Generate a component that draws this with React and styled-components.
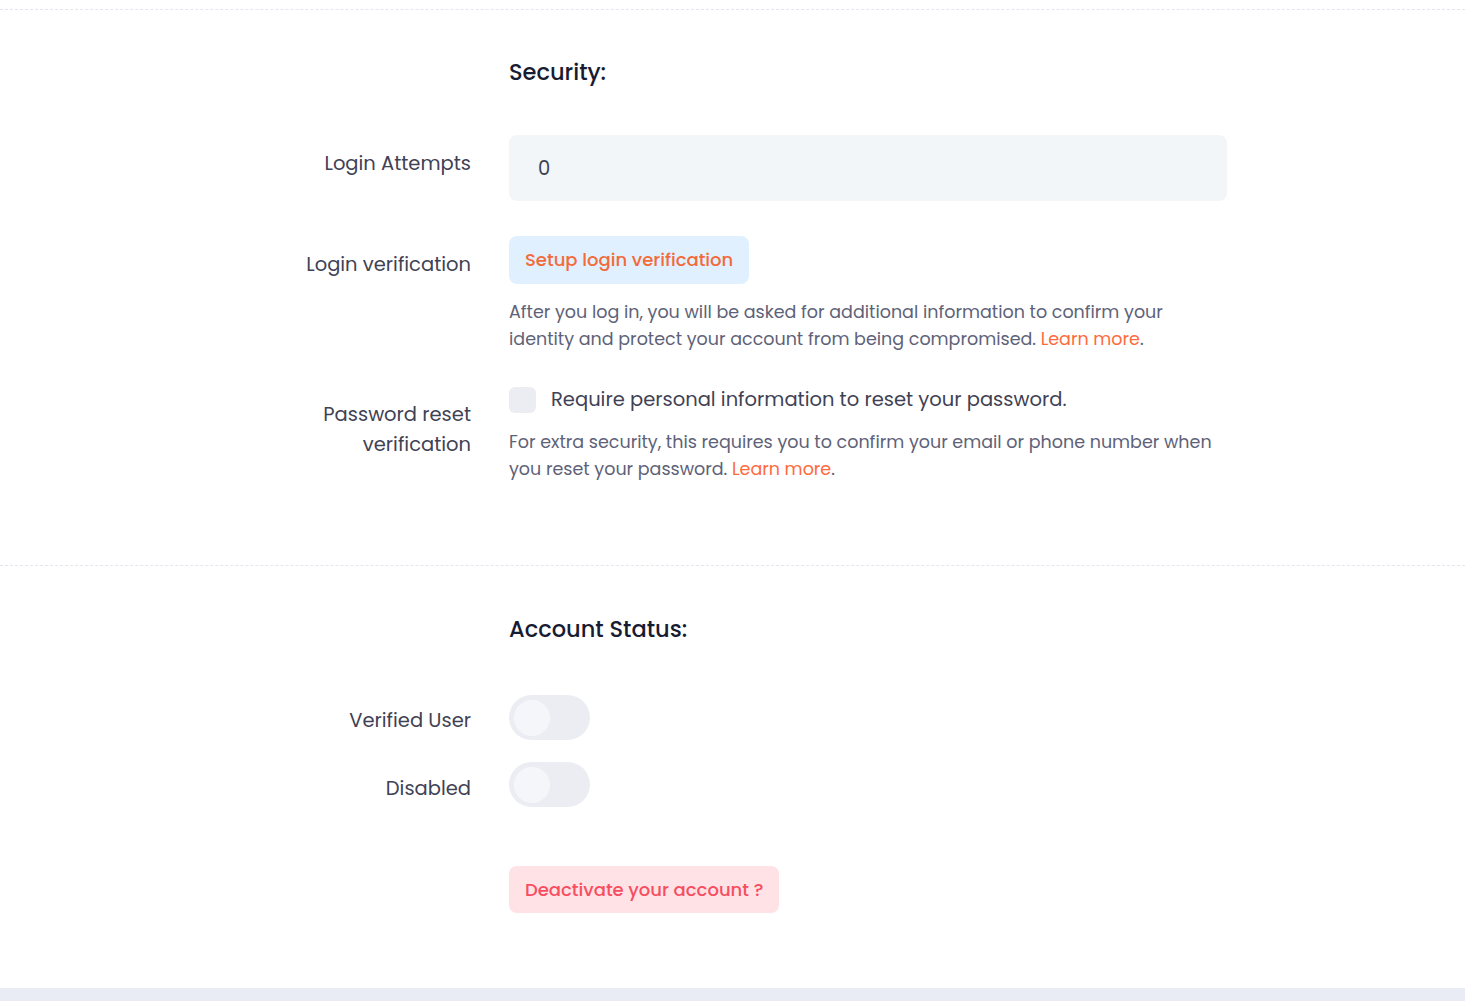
import React from "react"
import styled, { createGlobalStyle } from "styled-components"

const Global = createGlobalStyle`
  html, body { margin: 0; padding: 0; background: #eaecf5; }
  body { font-family: Poppins, "DejaVu Sans", sans-serif; }
`

const Card = styled.div`
  background: #ffffff;
  min-height: 988px;
  box-sizing: border-box;
`

const CardTop = styled.div`
  height: 9px;
  border-bottom: 1px dashed #e4e6ef;
`

const Section = styled.section`
  padding: ${p => p.$top || 47}px 0 ${p => p.$bottom || 82}px;
  border-bottom: ${p => (p.$divider ? "1px dashed #e4e6ef" : "none")};
`

const Row = styled.div`
  display: grid;
  grid-template-columns: 471px 718px;
  column-gap: 38px;
  margin-bottom: ${p => p.$gap ?? 35}px;
  &:last-child { margin-bottom: 0; }
`

const Heading = styled.h3`
  grid-column: 2;
  margin: 0 0 ${p => p.$gap || 48}px;
  font-size: 22.5px;
  line-height: 30px;
  font-weight: 500;
  color: #181c32;
`

const Label = styled.label`
  text-align: right;
  padding-top: ${p => p.$top ?? 15}px;
  font-size: 19.5px;
  line-height: ${p => p.$lh || 28}px;
  color: #3f4254;
`

const Field = styled.div`
  display: flex;
  flex-direction: column;
  align-items: flex-start;
`

const Input = styled.input`
  width: 100%;
  height: 66px;
  box-sizing: border-box;
  border: none;
  border-radius: 8px;
  background: #f3f6f9;
  padding: 0 29px;
  font-family: inherit;
  font-size: 19.5px;
  color: #3f4254;
  outline: none;
`

const SoftButton = styled.button`
  height: ${p => p.$h || 48}px;
  padding: 0 16px 1px;
  border: none;
  border-radius: 8px;
  font-family: inherit;
  font-size: 18px;
  font-weight: 500;
  cursor: pointer;
  background: ${p => (p.$danger ? "#ffe2e5" : "#e1f0ff")};
  color: ${p => (p.$danger ? "#f64e60" : "#f26b3a")};
`

const Hint = styled.p`
  margin: ${p => p.$top || 15}px 0 0;
  font-size: 17.5px;
  line-height: 27px;
  color: #5e6278;
`

const Link = styled.a`
  color: #ff6a3d;
  text-decoration: none;
`

const CheckLine = styled.label`
  display: flex;
  align-items: center;
  gap: 15px;
  font-size: 19.5px;
  line-height: 26px;
  color: #3f4254;
`

const Box = styled.span`
  width: 27px;
  height: 26px;
  border-radius: 6px;
  background: #ebedf3;
  flex-shrink: 0;
`

const Toggle = styled.span`
  display: block;
  width: 81px;
  height: 45px;
  border-radius: 23px;
  background: #ebedf3;
  position: relative;
  &::after {
    content: "";
    position: absolute;
    left: 5px;
    top: 5px;
    width: 36px;
    height: 36px;
    border-radius: 50%;
    background: #f5f6fa;
  }
`

export default function App() {
  return (
    <>
      <Global />
      <Card>
        <CardTop />
        <Section $divider>
          <Row $gap={0}>
            <div />
            <Heading>Security:</Heading>
          </Row>
          <Row>
            <Label>Login Attempts</Label>
            <Field>
              <Input defaultValue="0" />
            </Field>
          </Row>
          <Row $gap={34}>
            <Label>Login verification</Label>
            <Field>
              <SoftButton>Setup login verification</SoftButton>
              <Hint>
                After you log in, you will be asked for additional information to confirm your
                identity and protect your account from being compromised. <Link href="#">Learn more</Link>.
              </Hint>
            </Field>
          </Row>
          <Row>
            <Label $top={13} $lh={30}>Password reset<br />verification</Label>
            <Field>
              <CheckLine>
                <Box />
                Require personal information to reset your password.
              </CheckLine>
              <Hint $top={16}>
                For extra security, this requires you to confirm your email or phone number when
                you reset your password. <Link href="#">Learn more</Link>.
              </Hint>
            </Field>
          </Row>
        </Section>
        <Section $top={48} $bottom={75}>
          <Row $gap={0}>
            <div />
            <Heading $gap={51}>Account Status:</Heading>
          </Row>
          <Row $gap={22}>
            <Label $top={12}>Verified User</Label>
            <Field><Toggle /></Field>
          </Row>
          <Row $gap={59}>
            <Label $top={13}>Disabled</Label>
            <Field><Toggle /></Field>
          </Row>
          <Row>
            <div />
            <Field>
              <SoftButton $danger $h={47}>Deactivate your account ?</SoftButton>
            </Field>
          </Row>
        </Section>
      </Card>
    </>
  )
}
